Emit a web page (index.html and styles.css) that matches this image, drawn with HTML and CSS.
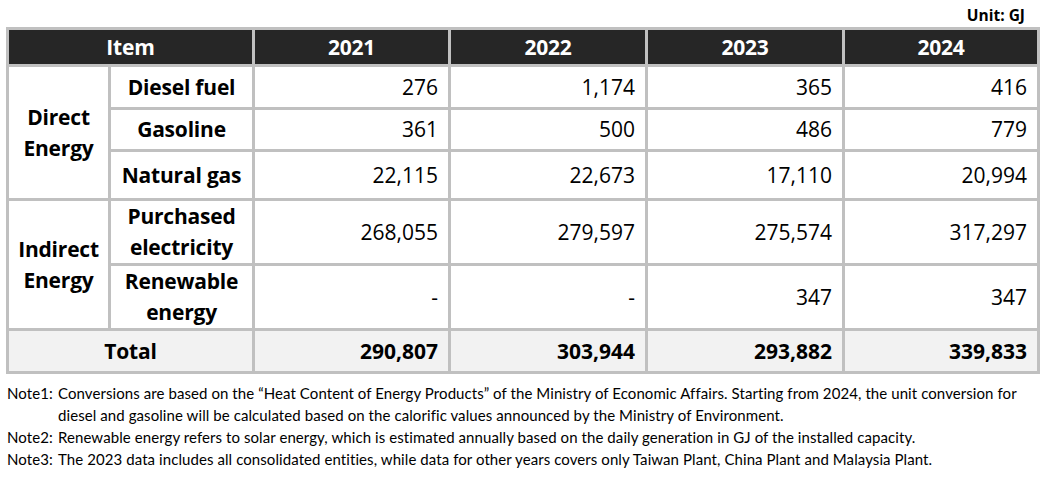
FILE: index.html
```html
<!DOCTYPE html>
<html lang="en">
<head>
<meta charset="utf-8">
<title>Energy consumption</title>
<link rel="stylesheet" href="styles.css">
</head>
<body>
<div class="page">
  <div class="unit">Unit: GJ</div>
  <table class="energy">
    <colgroup>
      <col class="c-cat">
      <col class="c-item">
      <col class="c-y1">
      <col class="c-y2">
      <col class="c-y3">
      <col class="c-y4">
    </colgroup>
    <thead>
      <tr class="r-head">
        <th colspan="2">Item</th>
        <th>2021</th>
        <th>2022</th>
        <th>2023</th>
        <th>2024</th>
      </tr>
    </thead>
    <tbody>
      <tr class="r-diesel">
        <th class="cat" rowspan="3">Direct<br>Energy</th>
        <th class="item">Diesel fuel</th>
        <td>276</td><td>1,174</td><td>365</td><td>416</td>
      </tr>
      <tr class="r-gas">
        <th class="item">Gasoline</th>
        <td>361</td><td>500</td><td>486</td><td>779</td>
      </tr>
      <tr class="r-ng">
        <th class="item">Natural gas</th>
        <td>22,115</td><td>22,673</td><td>17,110</td><td>20,994</td>
      </tr>
      <tr class="r-elec">
        <th class="cat" rowspan="2">Indirect<br>Energy</th>
        <th class="item">Purchased<br>electricity</th>
        <td>268,055</td><td>279,597</td><td>275,574</td><td>317,297</td>
      </tr>
      <tr class="r-renew">
        <th class="item">Renewable<br>energy</th>
        <td>-</td><td>-</td><td>347</td><td>347</td>
      </tr>
      <tr class="r-total">
        <th colspan="2">Total</th>
        <td>290,807</td><td>303,944</td><td>293,882</td><td>339,833</td>
      </tr>
    </tbody>
  </table>
  <div class="notes">
    <div class="label">Note1:</div>
    <div class="text">Conversions are based on the “Heat Content of Energy Products” of the Ministry of Economic Affairs. Starting from 2024, the unit conversion for<br>diesel and gasoline will be calculated based on the calorific values announced by the Ministry of Environment.</div>
    <div class="label">Note2:</div>
    <div class="text">Renewable energy refers to solar energy, which is estimated annually based on the daily generation in GJ of the installed capacity.</div>
    <div class="label">Note3:</div>
    <div class="text">The 2023 data includes all consolidated entities, while data for other years covers only Taiwan Plant, China Plant and Malaysia Plant.</div>
  </div>
</div>
</body>
</html>
```

FILE: styles.css
```css
html, body {
  margin: 0;
  padding: 0;
  background: #ffffff;
}

body {
  font-family: Calibri, Carlito, Lato, "Liberation Sans", sans-serif;
  color: #000000;
}

.page {
  padding: 6px 0 0 6px;
}

.unit {
  font-family: "Open Sans", "Liberation Sans", sans-serif;
  text-align: right;
  font-weight: 700;
  font-size: 15.5px;
  line-height: 18px;
  height: 21px;
  padding-right: 19px;
}

.energy {
  width: 1034px;
  table-layout: fixed;
  border-collapse: separate;
  border-spacing: 0;
  border-top: 3px solid #c0c0c0;
  border-left: 3px solid #c0c0c0;
  font-family: "Open Sans", Lato, "Liberation Sans", sans-serif;
  font-size: 21px;
  line-height: 31px;
}

.c-cat { width: 102px; }
.c-item { width: 144px; }
.c-y1 { width: 196px; }
.c-y2 { width: 197px; }
.c-y3 { width: 197px; }
.c-y4 { width: 195px; }

.energy th,
.energy td {
  border-right: 3px solid #c0c0c0;
  border-bottom: 3px solid #c0c0c0;
  padding: 0;
  vertical-align: middle;
  box-sizing: border-box;
}

.energy th {
  font-weight: 700;
  text-align: center;
  letter-spacing: -0.2px;
}

.energy td {
  text-align: right;
  padding-right: 10px;
  font-weight: 400;
}

.r-head th {
  background: #262626;
  color: #ffffff;
}

.r-head { height: 37px; }
.r-diesel { height: 43px; }
.r-gas { height: 42px; }
.r-ng { height: 49px; }
.r-elec { height: 64px; }
.r-renew { height: 63px; }
.r-total { height: 43px; }

.r-total th,
.r-total td {
  background: #f2f2f2;
  font-weight: 700;
}

.notes {
  display: grid;
  grid-template-columns: 51px 1fr;
  margin-top: 8px;
  padding-left: 1px;
  font-family: Lato, "Liberation Sans", sans-serif;
  font-size: 15px;
  letter-spacing: 0.08px;
  line-height: 22px;
}

.notes .label,
.notes .text {
  white-space: nowrap;
}
```
